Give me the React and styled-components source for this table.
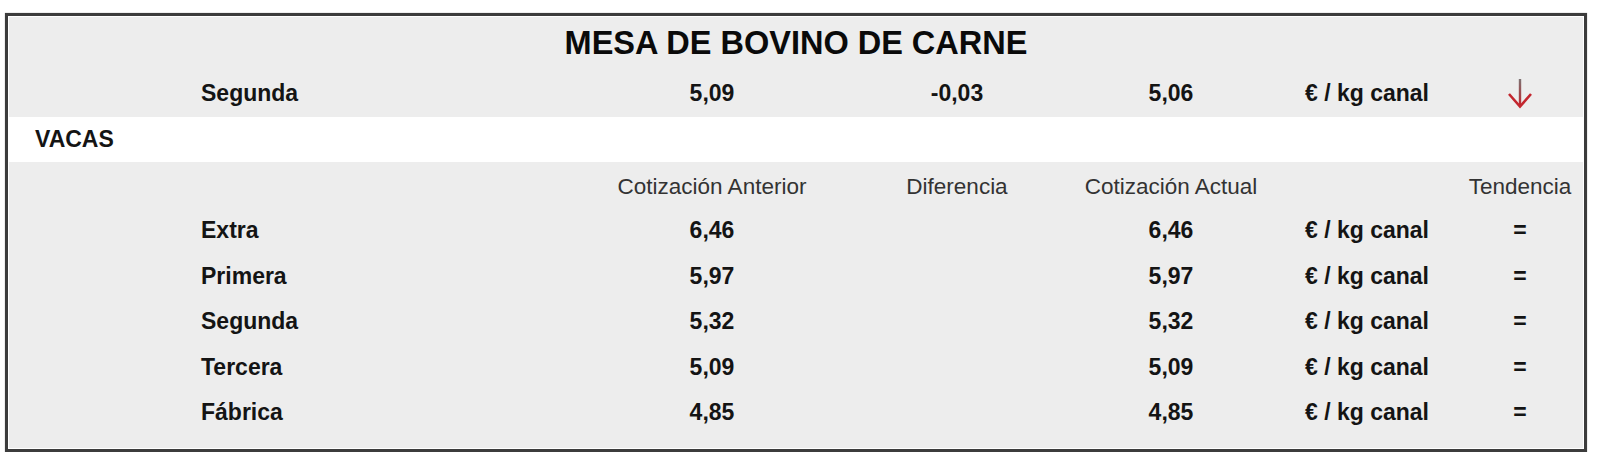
import styled, { createGlobalStyle } from "styled-components";

const GlobalStyle = createGlobalStyle`
  html, body {
    margin: 0;
    padding: 0;
    background: #ffffff;
  }
  body {
    font-family: "Liberation Sans", Arial, sans-serif;
    color: #111;
  }
`;

const cols = "192px 399px 224px 266px 162px 215px 106px 1fr";

const rows = [
  { name: "Extra", prev: "6,46", now: "6,46" },
  { name: "Primera", prev: "5,97", now: "5,97" },
  { name: "Segunda", prev: "5,32", now: "5,32" },
  { name: "Tercera", prev: "5,09", now: "5,09" },
  { name: "Fábrica", prev: "4,85", now: "4,85" },
];

const DownArrow = () => (
  <svg width="26" height="31" viewBox="0 0 26 31">
    <defs>
      <linearGradient id="shaft" gradientUnits="userSpaceOnUse" x1="13" y1="1" x2="13" y2="28">
        <stop offset="0" stopColor="#7d7373" />
        <stop offset="0.55" stopColor="#a0484c" />
        <stop offset="1" stopColor="#c3262e" />
      </linearGradient>
    </defs>
    <rect x="11.8" y="1" width="2.4" height="27" fill="url(#shaft)" />
    <polyline
      points="2,16 13,28.5 24,16"
      fill="none"
      stroke="#c3262e"
      strokeWidth="2.6"
      strokeLinejoin="miter"
    />
  </svg>
);

const App = () => {
  return (
    <>
      <GlobalStyle />
      <Board>
        <Panel>
          <Title>MESA DE BOVINO DE CARNE</Title>
          <Row $h="48px">
            <Cell />
            <Cell>Segunda</Cell>
            <Cell $center>5,09</Cell>
            <Cell $center>-0,03</Cell>
            <Cell $center>5,06</Cell>
            <Unit>€ / kg canal</Unit>
            <Cell $center>
              <DownArrow />
            </Cell>
          </Row>
        </Panel>
        <Section>VACAS</Section>
        <Panel $pad="4px 0 12.5px">
          <Row $h="42px" $head>
            <Cell />
            <Cell />
            <Cell $center>Cotización Anterior</Cell>
            <Cell $center>Diferencia</Cell>
            <Cell $center>Cotización Actual</Cell>
            <Cell />
            <Cell $center>Tendencia</Cell>
          </Row>
          {rows.map((r) => (
            <Row key={r.name} $h="45.5px">
              <Cell />
              <Cell>{r.name}</Cell>
              <Cell $center>{r.prev}</Cell>
              <Cell $center />
              <Cell $center>{r.now}</Cell>
              <Unit>€ / kg canal</Unit>
              <Cell $center>=</Cell>
            </Row>
          ))}
        </Panel>
      </Board>
    </>
  );
};

const Board = styled.div`
  box-sizing: border-box;
  width: 1582px;
  margin: 13px 0 0 5px;
  border: 3px solid #3c3c3c;
  padding: 1px;
  background: #ffffff;
  box-shadow: 0 0 1px rgba(0, 0, 0, 0.4);
`;

const Panel = styled.div`
  background: #ededed;
  padding: ${(p) => p.$pad || "0"};
`;

const Title = styled.div`
  height: 52px;
  line-height: 52px;
  text-align: center;
  font-size: 32.5px;
  font-weight: bold;
  color: #0a0a0a;
`;

const Row = styled.div`
  display: grid;
  grid-template-columns: ${cols};
  height: ${(p) => p.$h};
  font-size: ${(p) => (p.$head ? "22.5px" : "23px")};
  font-weight: ${(p) => (p.$head ? "normal" : "bold")};
  color: ${(p) => (p.$head ? "#333" : "#141414")};
`;

const Cell = styled.div`
  display: flex;
  align-items: center;
  justify-content: ${(p) => (p.$center ? "center" : "flex-start")};
  white-space: nowrap;
  min-width: 0;
`;

const Unit = styled(Cell)`
  padding-left: 53px;
`;

const Section = styled.div`
  height: 45px;
  display: flex;
  align-items: center;
  padding-left: 26px;
  background: #ffffff;
  font-size: 23px;
  font-weight: bold;
  color: #141414;
`;

export default App;
